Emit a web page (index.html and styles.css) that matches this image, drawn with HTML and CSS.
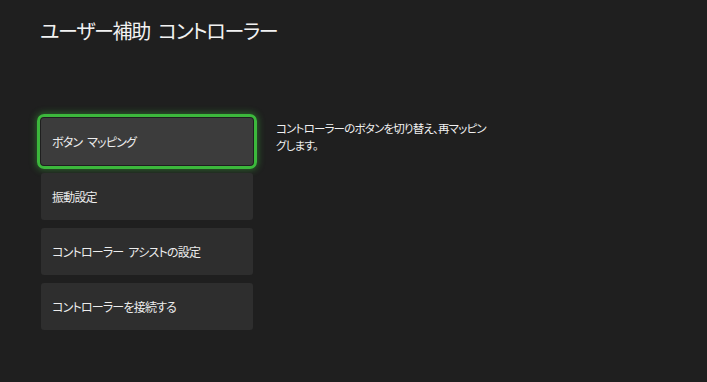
FILE: index.html
```html
<!DOCTYPE html>
<html lang="ja">
<head>
  <meta charset="UTF-8">
  <title>ユーザー補助 コントローラー</title>
  <link rel="stylesheet" href="styles.css">
</head>
<body>

  <div class="page">
    <h1 class="title">ユーザー補助 コントローラー</h1>

    <div class="content">
      <ul class="menu">
        <li class="menu-item focused">ボタン マッピング</li>
        <li class="menu-item">振動設定</li>
        <li class="menu-item">コントローラー アシストの設定</li>
        <li class="menu-item">コントローラーを接続する</li>
      </ul>

      <p class="description">コントローラーのボタンを切り替え、再マッピングします。</p>
    </div>
  </div>

</body>
</html>
```

FILE: styles.css
```css
body {
  margin: 0;
  padding: 0;
  background: #1f1f1f;
  color: #ffffff;
  font-family: "Noto Sans CJK JP", "Noto Sans", sans-serif;
  font-feature-settings: "palt";
}

.page {
  padding: 16px 0 0 40px;
}

.title {
  margin: 0;
  font-size: 20px;
  font-weight: normal;
  line-height: 30px;
  letter-spacing: -1.3px;
  word-spacing: 5px;
  color: #f2f2f2;
}

.content {
  display: flex;
  margin-top: 72px;
}

.menu {
  list-style: none;
  margin: 0;
  padding: 0 0 0 1px;
  display: flex;
  flex-direction: column;
  gap: 8px;
}

.menu-item {
  width: 212px;
  height: 47px;
  box-sizing: border-box;
  padding-left: 11px;
  display: flex;
  align-items: center;
  background: #2e2e2e;
  border-radius: 3px;
  font-size: 12px;
  letter-spacing: -0.8px;
  word-spacing: 3px;
  color: #ececec;
}

.menu-item.focused {
  background: #3c3c3c;
  outline: 3px solid #3cb83c;
  outline-offset: 1px;
  box-shadow: 0 0 0 4px #1f1f1f, 0 0 7px 5px rgba(60, 184, 60, 0.45);
}

.description {
  margin: 2px 0 0 23px;
  width: 216px;
  font-size: 11.5px;
  line-height: 17px;
  letter-spacing: -0.8px;
  color: #f0f0f0;
}
```
